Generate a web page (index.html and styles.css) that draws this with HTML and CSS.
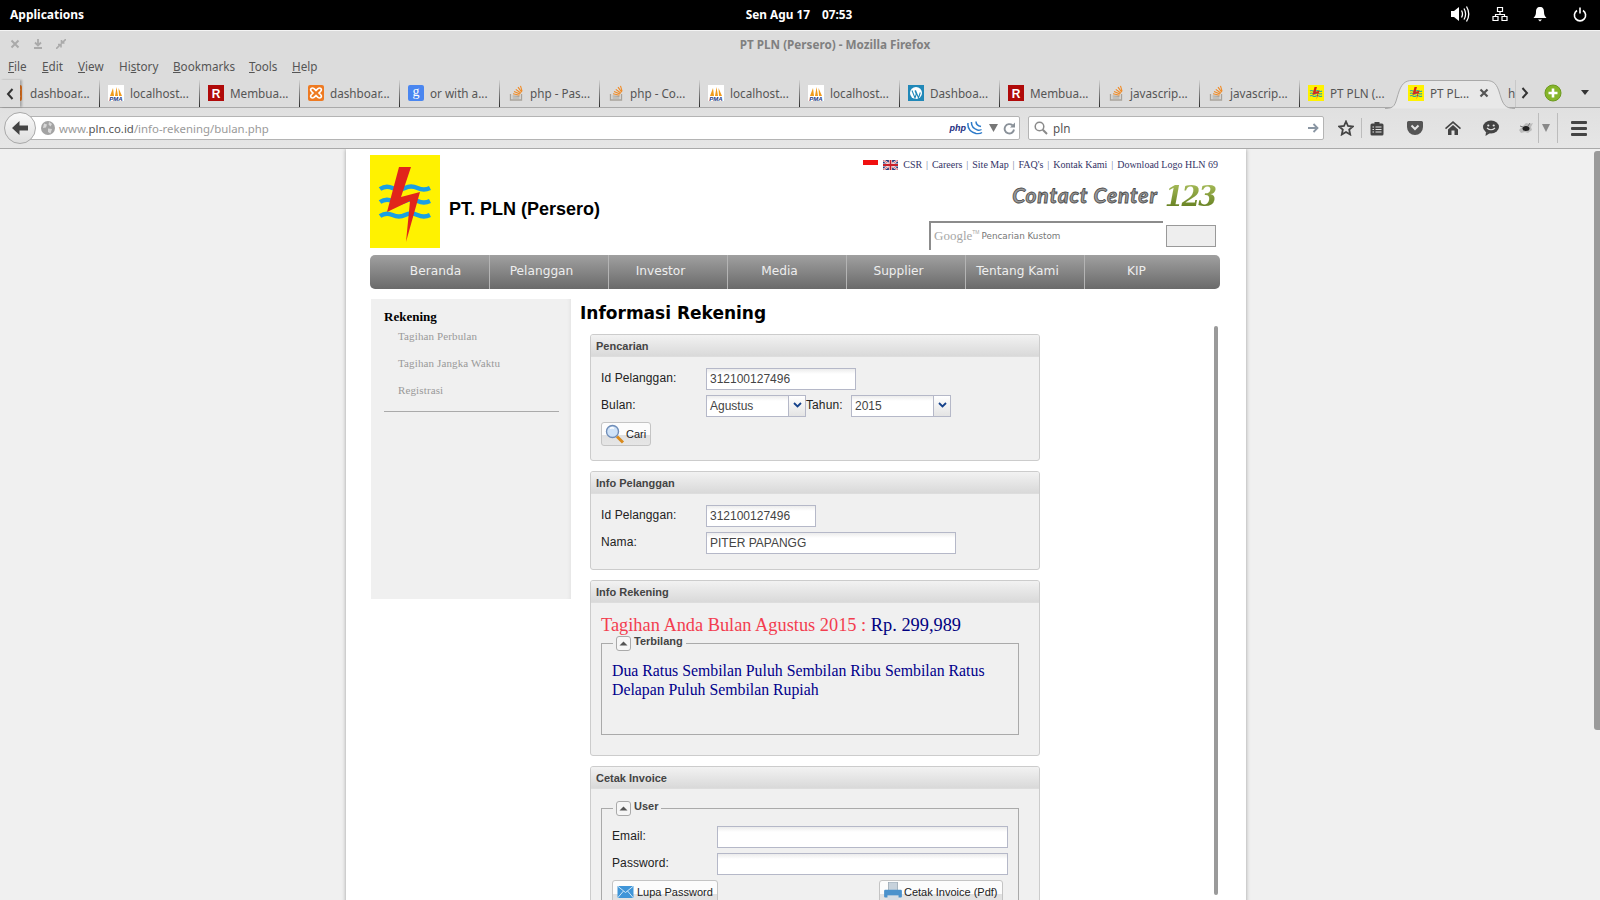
FILE: index.html
```html
<!DOCTYPE html>
<html lang="id">
<head>
<meta charset="utf-8">
<title>PT PLN (Persero) - Mozilla Firefox</title>
<link rel="stylesheet" href="styles.css">
</head>
<body>
<svg class="defs" width="0" height="0" aria-hidden="true">
  <symbol id="i-pma" viewBox="0 0 16 16">
    <rect width="16" height="16" fill="#fff"/>
    <path d="M2 11 5 3l1 8zM7 11l1.500-9L10 11zM11 11 10.500 3 14 11z" fill="#f09a1a"/>
  </symbol>
  <symbol id="i-r" viewBox="0 0 16 16">
    <rect width="16" height="16" fill="#b00a0a"/>
  </symbol>
  <symbol id="i-x" viewBox="0 0 16 16">
    <rect width="16" height="16" rx="2" fill="#ee7a22"/>
    <path d="M4.500 3C2.500 3 2 5 3.500 6.500L5 8 3.500 9.500C2 11 2.500 13 4.500 13 6 13 7 11.500 8 10.500 9 11.500 10 13 11.500 13 13.500 13 14 11 12.500 9.500L11 8l1.500-1.500C14 5 13.500 3 11.500 3 10 3 9 4.500 8 5.500 7 4.500 6 3 4.500 3z" fill="none" stroke="#fff" stroke-width="1.700"/>
  </symbol>
  <symbol id="i-g" viewBox="0 0 16 16">
    <rect width="16" height="16" rx="2" fill="#4a86f0"/>
  </symbol>
  <symbol id="i-so" viewBox="0 0 16 16">
    <path d="M2.500 9v6h11V9" fill="none" stroke="#a8a39a" stroke-width="1.300"/>
    <path d="M4.500 13h7M4.500 11l7 .4" stroke="#a8a39a" stroke-width="1.100"/>
    <path d="M5 8.800l6.500 1.400M6 6.500l6 2.600M7.800 4.400l5.200 3.800M10 2.200l3.700 5M12.500 .8l1.600 5.500" stroke="#f08a24" stroke-width="1.100"/>
  </symbol>
  <symbol id="i-wp" viewBox="0 0 16 16">
    <rect width="16" height="16" fill="#2188b8"/>
    <circle cx="8" cy="8" r="6" fill="#fff"/>
    <path d="M4 5.500 7 13l1.300-4L7 5.500M7.500 5.500l3 7.500 1.800-5.500" fill="none" stroke="#2188b8" stroke-width="1.100"/>
  </symbol>
  <symbol id="i-pln" viewBox="0 0 16 16">
    <rect width="16" height="16" fill="#fff200"/>
    <path d="M2 6q1.500-1 3 0t3 0 3 0 3 0M2 8.500q1.500-1 3 0t3 0 3 0 3 0M2 11q1.500-1 3 0t3 0 3 0 3 0" fill="none" stroke="#2ca6a0" stroke-width="1.100"/>
    <path d="M6.500 2h2.500L7.500 7l4-1.500L8.500 14.500l1-6.500-5 2z" fill="#d9231a"/>
  </symbol>
  <symbol id="i-tri-up" viewBox="0 0 15 15">
    <path d="M3.500 9.500 7.500 5.500l4 4z" fill="#555"/>
  </symbol>
</svg>

<header class="topbar">
  <div class="topbar-left">Applications</div>
  <div class="clock"><span>Sen Agu 17</span><span>07:53</span></div>
  <div class="tray">
    <svg width="20" height="18" viewBox="0 0 20 18"><path d="M1 6h3l5-4v14l-5-4H1z" fill="#fff"/><path d="M11.500 5.500q2 3.500 0 7M14 3.500q3.200 5.500 0 11M16.500 1.500q4.500 7.500 0 15" fill="none" stroke="#fff" stroke-width="1.300"/></svg>
    <svg class="tray-net" width="16" height="16" viewBox="0 0 16 16"><path d="M5.500 1.500h5v4h-5zM1 10.500h5v4H1zM10 10.500h5v4h-5zM8 5.500v3M3.500 10.500v-2h9v2" fill="none" stroke="#fff" stroke-width="1.200"/></svg>
    <svg class="tray-bell" width="14" height="16" viewBox="0 0 14 16"><path d="M7 1c3 0 4 2 4 5 0 3 1 4.500 2.500 6h-13C2 10.500 3 9 3 6c0-3 1-5 4-5zM5 13.500h4L7 15.500z" fill="#fff"/></svg>
    <svg class="tray-pow" width="14" height="15" viewBox="0 0 14 15"><path d="M4 3.500a5.600 5.600 0 1 0 6 0M7 .5v6" fill="none" stroke="#fff" stroke-width="1.600"/></svg>
  </div>
</header>

<div class="chrome">
  <div class="titlebar">
    <div class="winbtns">
      <svg width="10" height="10" viewBox="0 0 10 10"><path d="M1.500 1.500l7 7M8.500 1.500l-7 7" stroke="#aaa" stroke-width="2"/></svg>
      <svg width="10" height="10" viewBox="0 0 10 10"><path d="M5 0v5M2 3.500l3 3 3-3M1 9h8" fill="none" stroke="#aaa" stroke-width="1.800"/></svg>
      <svg width="10" height="10" viewBox="0 0 10 10"><path d="M0 10l4-4M2 5.500h3v3M10 0L6 4M5.500 1v3h3" fill="none" stroke="#aaa" stroke-width="1.600"/></svg>
    </div>
    <div class="wintitle">PT PLN (Persero) - Mozilla Firefox</div>
  </div>
  <nav class="menubar">
    <span class="m-file"><u>F</u>ile</span>
    <span class="m-edit"><u>E</u>dit</span>
    <span class="m-view"><u>V</u>iew</span>
    <span class="m-hist">Hi<u>s</u>tory</span>
    <span class="m-book"><u>B</u>ookmarks</span>
    <span class="m-tool"><u>T</u>ools</span>
    <span class="m-help"><u>H</u>elp</span>
  </nav>
  <div class="tabstrip">
    <div class="tab-scroll"><svg width="8" height="12" viewBox="0 0 8 12"><path d="M6.500 1 2 6l4.500 5" fill="none" stroke="#333" stroke-width="2"/></svg></div>
    <div class="tab tab-first"><svg class="fav fav-clip" width="16" height="16"><use href="#i-x"/></svg><span>dashboar...</span></div>
    <div class="tab"><svg class="fav" width="16" height="16" viewBox="0 0 16 16"><use href="#i-pma"/><text x="8" y="15.800" class="svg-pma">PMA</text></svg><span>localhost...</span></div>
    <div class="tab"><svg class="fav" width="16" height="16" viewBox="0 0 16 16"><use href="#i-r"/><text x="8" y="13" class="svg-r">R</text></svg><span>Membua...</span></div>
    <div class="tab"><svg class="fav" width="16" height="16"><use href="#i-x"/></svg><span>dashboar...</span></div>
    <div class="tab"><svg class="fav" width="16" height="16" viewBox="0 0 16 16"><use href="#i-g"/><text x="8" y="11" class="svg-g">g</text></svg><span>or with a...</span></div>
    <div class="tab"><svg class="fav" width="16" height="16"><use href="#i-so"/></svg><span>php - Pas...</span></div>
    <div class="tab"><svg class="fav" width="16" height="16"><use href="#i-so"/></svg><span>php - Co...</span></div>
    <div class="tab"><svg class="fav" width="16" height="16" viewBox="0 0 16 16"><use href="#i-pma"/><text x="8" y="15.800" class="svg-pma">PMA</text></svg><span>localhost...</span></div>
    <div class="tab"><svg class="fav" width="16" height="16" viewBox="0 0 16 16"><use href="#i-pma"/><text x="8" y="15.800" class="svg-pma">PMA</text></svg><span>localhost...</span></div>
    <div class="tab"><svg class="fav" width="16" height="16"><use href="#i-wp"/></svg><span>Dashboa...</span></div>
    <div class="tab"><svg class="fav" width="16" height="16" viewBox="0 0 16 16"><use href="#i-r"/><text x="8" y="13" class="svg-r">R</text></svg><span>Membua...</span></div>
    <div class="tab"><svg class="fav" width="16" height="16"><use href="#i-so"/></svg><span>javascrip...</span></div>
    <div class="tab"><svg class="fav" width="16" height="16"><use href="#i-so"/></svg><span>javascrip...</span></div>
    <div class="tab tab-plain"><svg class="fav" width="16" height="16"><use href="#i-pln"/></svg><span>PT PLN (...</span></div>
    <div class="tab tab-active">
      <svg class="tab-shape" width="130" height="29" viewBox="0 0 130 29"><path d="M0 28.500c10 0 10-4 13-14C16 4 20 .5 27 .5h74c8 0 11 3.500 14 14 3 10 5 14 15 14" fill="#e8e8e8" stroke="#a9a9a9"/></svg>
      <svg class="fav" width="16" height="16"><use href="#i-pln"/></svg><span>PT PL...</span>
      <svg class="tab-close" width="10" height="10" viewBox="0 0 10 10"><path d="M1.500 1.500l7 7M8.500 1.500l-7 7" stroke="#555" stroke-width="2.200"/></svg>
    </div>
    <div class="tab tab-cut"><span>h</span></div>
    <div class="tab-right">
      <svg width="8" height="12" viewBox="0 0 8 12"><path d="M1.500 1 6 6l-4.500 5" fill="none" stroke="#333" stroke-width="2"/></svg>
      <svg width="18" height="18" viewBox="0 0 18 18"><circle cx="9" cy="9" r="8" fill="#86b52a" stroke="#6c9a1e"/><path d="M9 4.500v9M4.500 9h9" stroke="#fff" stroke-width="2.600"/></svg>
      <svg width="8" height="5" viewBox="0 0 8 5"><path d="M0 0h8L4 5z" fill="#333"/></svg>
    </div>
  </div>
  <div class="toolbar">
    <div class="backbtn"><svg width="16" height="14" viewBox="0 0 16 14"><path d="M7.500 0 0 7l7.500 7v-4.500H16v-5H7.500z" fill="#444"/></svg></div>
    <div class="urlbar">
      <svg class="globe" width="14" height="14" viewBox="0 0 14 14"><circle cx="7" cy="7" r="7" fill="#a3a3a3"/><path d="M3 2.500l3 1-1 3-3 .5zM8 1l3 2-1.500 2.500L7.500 3.500zM7 7.500l4 .5-1.500 4.500L7 11z" fill="#d8d8d8"/></svg>
      <span class="url"><span class="url-dim">www.</span><span class="url-host">pln.co.id</span><span class="url-dim">/info-rekening/bulan.php</span></span>
      <span class="urlicons">
        <span class="php">php</span>
        <svg width="16" height="14" viewBox="0 0 16 14"><path d="M1 2q-1 8 8 10.500 4 .5 6-1M4.500 1q-.5 6 6 8 2.500.5 4-.5M9 .5q0 4 5 5" fill="none" stroke="#2c7ac9" stroke-width="1.500"/></svg>
        <svg class="ui-tri" width="9" height="8" viewBox="0 0 9 8"><path d="M0 0h9L4.500 8z" fill="#777"/></svg>
        <svg width="13" height="13" viewBox="0 0 13 13"><path d="M11 7.500a4.700 4.700 0 1 1-1.500-4.200" fill="none" stroke="#8a9199" stroke-width="1.900"/><path d="M12 .5v5H7z" fill="#8a9199"/></svg>
      </span>
    </div>
    <div class="searchbar">
      <svg width="14" height="14" viewBox="0 0 14 14"><circle cx="5.500" cy="5.500" r="4.300" fill="none" stroke="#8a8a8a" stroke-width="1.500"/><path d="M8.800 8.800 13 13" stroke="#8a8a8a" stroke-width="2"/></svg>
      <span class="searchtext">pln</span>
      <svg class="search-go" width="11" height="10" viewBox="0 0 11 10"><path d="M0 5h9M5.500 1 9.500 5l-4 4" fill="none" stroke="#8a96a3" stroke-width="1.800"/></svg>
    </div>
    <div class="tools">
      <div class="tool t-star"><svg width="16" height="16" viewBox="0 0 16 16"><path d="M8 1.500 10 6l4.800.5-3.600 3.200 1 4.800L8 12l-4.200 2.500 1-4.800L1.200 6.500 6 6z" fill="none" stroke="#444" stroke-width="1.800"/></svg></div>
      <div class="tsep t-sep1"></div>
      <div class="tool t-clip"><svg width="14" height="15" viewBox="0 0 14 15"><path d="M2 2.500h2.500V1h5v1.500H12a1.500 1.500 0 0 1 1.500 1.500v9A1.500 1.500 0 0 1 12 14.500H2A1.500 1.500 0 0 1 .5 13V4A1.500 1.500 0 0 1 2 2.500z" fill="#444"/><path d="M2.500 6h1.500M5.500 6h6M2.500 8.500h1.500M5.500 8.500h6M2.500 11h1.500M5.500 11h6" stroke="#e4e4e4"/></svg></div>
      <div class="tool t-wide t-pocket"><svg width="16" height="14" viewBox="0 0 16 14"><path d="M1.500 0h13A1.500 1.500 0 0 1 16 1.500V6a8 8 0 0 1-16 0V1.500A1.500 1.500 0 0 1 1.500 0z" fill="#555"/><path d="M4.500 4.500 8 8l3.500-3.500" fill="none" stroke="#e4e4e4" stroke-width="2"/></svg></div>
      <div class="tool t-wide"><svg width="16" height="14" viewBox="0 0 16 14"><path d="M8 0 16 7l-1 1.200-7-6-7 6L0 7zM3 8.500 8 4l5 4.500V14H9.500V9.500h-3V14H3z" fill="#444"/></svg></div>
      <div class="tool t-wide"><svg width="16" height="16" viewBox="0 0 16 16"><ellipse cx="8" cy="7" rx="8" ry="6.500" fill="#444"/><path d="M3 12 2.500 16 7 13z" fill="#444"/><circle cx="5.300" cy="5.500" r="1.100" fill="#e4e4e4"/><circle cx="10.700" cy="5.500" r="1.100" fill="#e4e4e4"/><path d="M4 8q4 3.500 8 0" fill="none" stroke="#e4e4e4" stroke-width="1.200"/></svg></div>
      <div class="tool t-ghost"><svg width="16" height="12" viewBox="0 0 16 12"><path d="M1 8 5 4l3-3 4 1 3-1-2 4 1 3-4 3-3-1-4 1z" fill="#bbb"/><ellipse cx="8" cy="6.500" rx="3.500" ry="2.500" fill="#222"/><path d="M2 4l3 1M12 1l-2 3" stroke="#777"/></svg></div>
      <div class="tsep t-sep2"></div>
      <div class="tool t-tri"><svg width="8" height="8" viewBox="0 0 8 8"><path d="M0 0h8L4 8z" fill="#888"/></svg></div>
      <div class="tsep t-sep3"></div>
      <div class="tool t-burger"><span></span><span></span><span></span></div>
    </div>
  </div>
</div>

<div class="viewport">
  <div class="sitewrap">
    <div class="site">
      <header class="sitehead">
        <svg class="logo" width="70" height="93" viewBox="0 0 70 93">
          <rect width="70" height="93" fill="#fff200"/>
          <g fill="none" stroke="#1aa0e2" stroke-width="4.500">
            <path d="M10 34q6-4 12.500-1t12.500 0 12.500 0 12.500 0"/>
            <path d="M10 47q6-4 12.500-1t12.500 0 12.500 0 12.500 0"/>
            <path d="M10 61q6-4 12.500-1t12.500 0 12.500 0 12.500 0"/>
          </g>
          <path d="M29 12h12L31 42l19-5-14 50 4-41-23 11z" fill="#e1251b"/>
        </svg>
        <div class="sitename">PT. PLN (Persero)</div>
        <div class="headright">
          <div class="toplinks">
            <span class="flag-id"></span>
            <svg class="flag-uk" width="15" height="10" viewBox="0 0 15 10"><rect width="15" height="10" fill="#2a3a7a"/><path d="M0 0l15 10M15 0 0 10" stroke="#fff" stroke-width="2"/><path d="M0 0l15 10M15 0 0 10" stroke="#c8202a" stroke-width=".7"/><path d="M7.500 0v10M0 5h15" stroke="#fff" stroke-width="3.200"/><path d="M7.500 0v10M0 5h15" stroke="#c8202a" stroke-width="1.800"/></svg>
            <span class="toplink-text">CSR <i>|</i> Careers <i>|</i> Site Map <i>|</i> FAQ's <i>|</i> Kontak Kami <i>|</i> Download Logo HLN 69</span>
          </div>
          <div class="contact"><span class="contact-a">Contact Center</span><span class="contact-b">123</span></div>
          <div class="sitesearch">
            <div class="gbox"><span class="glogo">Google<sup>TM</sup></span><span class="gtext">Pencarian Kustom</span></div>
            <div class="gbtn"></div>
          </div>
        </div>
      </header>
      <nav class="mainnav">
        <a class="nav-first">Beranda</a>
        <a>Pelanggan</a>
        <a>Investor</a>
        <a>Media</a>
        <a>Supplier</a>
        <a>Tentang Kami</a>
        <a class="nav-last">KIP</a>
      </nav>
      <div class="columns">
        <aside class="sidebar">
          <div class="side-title">Rekening</div>
          <ul class="side-list">
            <li>Tagihan Perbulan</li>
            <li>Tagihan Jangka Waktu</li>
            <li>Registrasi</li>
          </ul>
          <div class="side-rule"></div>
        </aside>
        <main class="content">
          <h1>Informasi Rekening</h1>

          <section class="panel p-cari">
            <div class="panel-head">Pencarian</div>
            <div class="panel-body">
              <div class="frow">
                <label>Id Pelanggan:</label>
                <input class="inp w150" type="text" value="312100127496">
              </div>
              <div class="frow">
                <label>Bulan:</label>
                <div class="combo w100"><span>Agustus</span><b><svg width="9" height="6" viewBox="0 0 9 6"><path d="M1 1l3.500 3.500L8 1" fill="none" stroke="#15428b" stroke-width="1.800"/></svg></b></div>
                <label class="lab-tahun">Tahun:</label>
                <div class="combo w100"><span>2015</span><b><svg width="9" height="6" viewBox="0 0 9 6"><path d="M1 1l3.500 3.500L8 1" fill="none" stroke="#15428b" stroke-width="1.800"/></svg></b></div>
              </div>
              <button class="btn btn-cari" type="button">
                <svg width="20" height="20" viewBox="0 0 20 20"><circle cx="7.500" cy="7.500" r="6" fill="#cfe2f7" stroke="#6f8db8" stroke-width="1.400"/><path d="M5 4.500q2-1.500 4 0" fill="none" stroke="#fff" stroke-width="1.400"/><path d="M12 12.500l6 6" stroke="#d98a1c" stroke-width="3"/></svg>
                <span>Cari</span>
              </button>
            </div>
          </section>

          <section class="panel p-info">
            <div class="panel-head">Info Pelanggan</div>
            <div class="panel-body">
              <div class="frow">
                <label>Id Pelanggan:</label>
                <input class="inp w110" type="text" value="312100127496">
              </div>
              <div class="frow">
                <label>Nama:</label>
                <input class="inp w250" type="text" value="PITER PAPANGG">
              </div>
            </div>
          </section>

          <section class="panel p-rek">
            <div class="panel-head">Info Rekening</div>
            <div class="panel-body body-rek">
              <div class="tagihan"><span class="tag-red">Tagihan Anda Bulan Agustus 2015 :</span> <span class="tag-blue">Rp. 299,989</span></div>
              <fieldset class="fset fset-terbilang">
                <legend><span class="coll"><svg width="15" height="15"><use href="#i-tri-up"/></svg></span><span class="leg-text">Terbilang</span></legend>
                <p class="terbilang">Dua Ratus Sembilan Puluh Sembilan Ribu Sembilan Ratus Delapan Puluh Sembilan Rupiah</p>
              </fieldset>
            </div>
          </section>

          <section class="panel p-cetak">
            <div class="panel-head">Cetak Invoice</div>
            <div class="panel-body body-rek2">
              <fieldset class="fset fset-user">
                <legend><span class="coll"><svg width="15" height="15"><use href="#i-tri-up"/></svg></span><span class="leg-text">User</span></legend>
                <div class="frow frow-u">
                  <label>Email:</label>
                  <input class="inp w291" type="text">
                </div>
                <div class="frow frow-u">
                  <label>Password:</label>
                  <input class="inp w291" type="password">
                </div>
                <div class="btnrow">
                  <button class="btn btn-lupa" type="button">
                    <svg width="17" height="12" viewBox="0 0 16 12"><rect width="16" height="12" fill="#3f95d8"/><path d="M0 0l8 6.500L16 0M0 12l6-7M16 12l-6-7" fill="none" stroke="#cde6f8" stroke-width="1"/></svg>
                    <span>Lupa Password</span>
                  </button>
                  <button class="btn btn-cetak" type="button">
                    <svg width="18" height="20" viewBox="0 0 16 18"><rect x="4" y="0" width="8" height="8" fill="#c7d2dc" stroke="#8b9aa8" stroke-width=".6"/><rect x="0" y="7" width="16" height="7" rx="1" fill="#4b92cc"/><rect x="3" y="12" width="10" height="6" fill="#d5dde4"/></svg>
                    <span>Cetak Invoice (Pdf)</span>
                  </button>
                </div>
              </fieldset>
            </div>
          </section>
        </main>
      </div>
      <div class="inner-scroll"></div>
    </div>
  </div>
  <div class="page-scroll"></div>
</div>
</body>
</html>
```
FILE: styles.css
```css
* { box-sizing: border-box; }
html, body { margin: 0; padding: 0; height: 100%; overflow: hidden; }
body { width: 1600px; height: 900px; display: flex; flex-direction: column; font-family: "Noto Sans", sans-serif; background: #f0f0f0; }
.defs { position: absolute; }
.svg-pma { font: italic bold 6px "Liberation Sans", sans-serif; fill: #23377f; text-anchor: middle; }
.svg-r { font: bold 12px "Liberation Sans", sans-serif; fill: #fff; text-anchor: middle; }
.svg-g { font: 14px "Liberation Serif", serif; fill: #fff; text-anchor: middle; }

/* desktop panel */
.topbar { flex: none; height: 31px; padding-bottom: 2px; background: #000; border-bottom: 1px solid #f4f4f4; display: grid; grid-template-columns: 1fr auto 1fr; align-items: center; color: #fff; font-size: 12px; font-weight: 700; }
.topbar-left { padding-left: 10px; }
.clock { display: flex; gap: 12px; font-size: 11.800px; margin-left: -2px; }
.tray { display: flex; align-items: center; justify-content: flex-end; padding-right: 13px; }
.tray-net { margin-left: 22px; }
.tray-bell { margin-left: 25px; }
.tray-pow { margin-left: 26px; }

/* firefox chrome */
.chrome { flex: none; background: #dcdcdc; color: #555; font-size: 11.700px; }
.titlebar { height: 26px; display: flex; align-items: center; }
.winbtns { width: 70px; display: flex; gap: 13px; padding-left: 10px; }
.wintitle { flex: 1; text-align: center; font-weight: 700; color: #808080; }
.menubar { height: 21px; padding: 0 0 4px 8px; display: flex; align-items: center; color: #555; }
.menubar span { margin-right: 16px; }
.menubar .m-file { width: 18px; }
.menubar .m-edit { width: 20px; }
.menubar .m-view { width: 25px; }
.menubar .m-hist { width: 38px; }
.menubar .m-book { width: 60px; }
.menubar .m-tool { width: 27px; }
.tabstrip { height: 30px; display: flex; align-items: stretch; border-bottom: 1px solid #a9a9a9; padding-top: 2px; }
.tab-scroll { width: 20px; display: flex; align-items: center; padding-left: 6px; position: relative; box-shadow: 2px 0 2px rgba(0,0,0,.25); z-index: 2; }
.tab { width: 100px; flex: none; display: flex; align-items: center; padding: 0 0 2px 8px; border-right: 1px solid; border-image: linear-gradient(to bottom, transparent, #222) 1; color: #555; }
.tab span { margin-left: 6px; white-space: nowrap; }
.fav { flex: none; }
.tab-first { width: 80px; padding-left: 0; overflow: hidden; }
.fav-clip { margin-left: -14px; }
.tab-first span { margin-left: 8px; }
.tab-plain { border-right: 0; }
.tab-active { position: relative; border-right: 0; }
.tab-active > .fav, .tab-active > span, .tab-close { position: relative; }
.tab-shape { position: absolute; left: -15px; top: 0; }
.tab-close { margin-left: 10px; }
.tab-cut { width: 15px; padding-left: 8px; border-right: 0; overflow: hidden; }
.tab-cut span { margin-left: 0; }
.tab-right { flex: 1; display: flex; align-items: center; border-left: 1px solid #c8c8c8; position: relative; padding: 0 0 2px 5px; background: #dcdcdc; }
.tab-right svg:nth-child(2) { margin-left: 15px; }
.tab-right svg:nth-child(3) { margin-left: 19px; }
.toolbar { height: 41px; display: flex; align-items: center; padding: 0 0 0 4px; background: linear-gradient(#e0e0e0, #e6e6e6); border-bottom: 1px solid #a9a9a9; }
.backbtn { width: 32px; height: 32px; flex: none; border-radius: 50%; background: linear-gradient(#fafafa, #dedede); border: 1px solid #a9a9a9; display: flex; align-items: center; justify-content: center; position: relative; z-index: 1; }
.urlbar { flex: 1; height: 24px; margin-left: -8px; padding-left: 12px; background: #fff; border: 1px solid #b4b4b4; border-radius: 0 2px 2px 0; display: flex; align-items: center; }
.globe { flex: none; }
.url { margin-left: 4px; white-space: nowrap; font-size: 11.400px; }
.url-dim { color: #9a9a9a; }
.url-host { color: #555; }
.urlicons { margin-left: auto; display: flex; align-items: center; padding-right: 3px; }
.php { font: italic bold 9px "Liberation Sans", sans-serif; color: #23307f; margin-right: 1px; }
.ui-tri { margin: 0 5px 0 6px; }
.searchbar { width: 296px; height: 24px; flex: none; margin-left: 8px; background: #fff; border: 1px solid #b4b4b4; border-radius: 2px; display: flex; align-items: center; padding: 0 4px 0 5px; }
.searchtext { margin-left: 5px; color: #555; }
.search-go { margin-left: auto; }
.tools { flex: none; width: 276px; display: flex; align-items: center; padding-left: 10px; height: 100%; }
.tool { display: flex; align-items: center; justify-content: center; flex: none; }
.t-star { width: 24px; }
.tsep { width: 1px; flex: none; background: #bcbcbc; }
.t-sep1 { height: 20px; margin-left: 3px; }
.t-clip { width: 30px; }
.t-wide { width: 38px; }
.t-pocket { margin-left: 4px; }
.t-ghost { width: 25px; margin-left: 3px; }
.t-sep2, .t-sep3 { height: 30px; }
.t-tri { width: 14px; }
.t-sep3 { margin-left: 4px; }
.t-burger { flex-direction: column; gap: 3px; margin-left: 13px; }
.t-burger span { display: block; width: 16px; height: 3px; background: #444; border-radius: 1px; }

/* page */
.viewport { flex: 1; min-height: 0; position: relative; overflow: hidden; background: #f0f0f0; }
.sitewrap { display: flex; justify-content: center; padding-right: 8px; height: 100%; }
.site { width: 900px; height: 1200px; padding: 6px 26px 0 24px; background: #fff; box-shadow: 0 0 4px rgba(0,0,0,.35); position: relative; }
.sitehead { display: flex; height: 93px; }
.logo { flex: none; }
.sitename { margin: 44px 0 0 9px; font: 700 18px/20px "Liberation Sans", sans-serif; color: #000; white-space: nowrap; }
.headright { margin-left: auto; display: flex; flex-direction: column; align-items: flex-end; padding-right: 2px; }
.toplinks { display: flex; align-items: center; height: 20px; padding-top: 4px; font: 10px/12px "Liberation Serif", serif; color: #333366; }
.toplinks i { font-style: normal; color: #6a7a9a; margin: 0 1.400px; }
.flag-id { width: 15px; height: 10px; background: linear-gradient(#f01010 50%, #fff 50%); margin-right: 5px; }
.flag-uk { margin-right: 5px; }
.contact { display: flex; align-items: center; height: 27px; margin-top: 10px; }
.contact-a { font: italic 700 21px/27px "Lato", sans-serif; color: #9a9a9a; -webkit-text-stroke: .8px #4a4a4a; letter-spacing: .8px; white-space: nowrap; }
.contact-b { margin: 4px 0 0 7px; font: italic 700 27px/27px "DejaVu Serif", serif; background: linear-gradient(#a8bd5a, #5f7a1c); -webkit-background-clip: text; background-clip: text; color: transparent; letter-spacing: -2px; padding-right: 3px; }
.sitesearch { display: flex; align-items: flex-start; margin-top: 13px; padding-right: 2px; }
.gbox { width: 234px; height: 29px; border-top: 2px solid #8c8c8c; border-left: 2px solid #8c8c8c; display: flex; align-items: center; padding: 0 0 2px 3px; background: #fff; }
.glogo { font: 13px "Liberation Serif", serif; color: #a6a6a6; }
.glogo sup { font: 5px "Liberation Sans", sans-serif; vertical-align: 6px; }
.gtext { margin-left: 2px; font: 8.800px "DejaVu Sans", sans-serif; color: #777; }
.gbtn { width: 50px; height: 22px; margin: 4px 0 0 3px; background: #eee; border: 1px solid #999; }

.mainnav { display: flex; height: 34px; margin-top: 7px; width: 850px; border-radius: 5px; background: linear-gradient(#a0a0a0, #6a6a6a); overflow: hidden; }
.mainnav a { width: 119px; flex: none; padding: 0 15px 3px 0; display: flex; align-items: center; justify-content: center; color: #eee; font: 12.200px "DejaVu Sans", sans-serif; border-right: 1px solid #b4b4b4; }
.mainnav .nav-first { padding-left: 12px; padding-right: 0; width: 120px; }
.mainnav .nav-last { border-right: 0; flex: 1; padding-right: 32px; }

.columns { display: flex; margin-top: 10px; }
.sidebar { width: 200px; height: 300px; flex: none; background: #f0f0f0; margin-left: 1px; padding: 11px 12px 0 13px; box-shadow: inset -4px 0 4px -3px rgba(0,0,0,.06); }
.side-title { font: 700 13px/14px "Liberation Serif", serif; color: #000; }
.side-list { list-style: none; margin: 0; padding: 5px 0 1px 14px; font: 11px/14px "Liberation Serif", serif; color: #999; letter-spacing: .13px; }
.side-list li { height: 27px; }
.side-rule { height: 1px; background: #aaa; }
.content { width: 460px; margin-left: 9px; }
h1 { margin: 0; font: 700 17px/28px "DejaVu Sans", sans-serif; color: #000; height: 35px; }

.panel { width: 450px; margin: 0 0 10px 10px; background: #f0f0f0; border: 1px solid #ccc; border-radius: 3px; overflow: hidden; }
.panel-head { height: 22px; padding-left: 5px; background: linear-gradient(#f2f2f2, #d9d9d9); border-bottom: 1px solid #ddd; font: 700 11px/22px "Liberation Sans", sans-serif; color: #444; }
.p-cari { height: 127px; }
.p-info { height: 99px; }
.p-rek { height: 176px; }
.p-cetak { height: 300px; margin-bottom: 0; }
.panel-body { padding: 11px 10px 0; font: 12px "Liberation Sans", sans-serif; color: #222; }
.frow { display: flex; height: 27px; align-items: flex-start; }
.frow label { width: 105px; flex: none; line-height: 20px; color: #222; letter-spacing: .1px; }
.frow .lab-tahun { width: 45px; }
.inp { height: 22px; padding: 0 3px; border: 1px solid #b5b8c8; border-radius: 0; background: linear-gradient(#ececec, #fff 5px); font: 12px "Liberation Sans", sans-serif; color: #444; outline: 0; }
.w150 { width: 150px; }
.w110 { width: 110px; }
.w250 { width: 250px; }
.w291 { width: 291px; }
.combo { display: flex; height: 22px; border: 1px solid #b5b8c8; background: linear-gradient(#ececec, #fff 5px); color: #444; line-height: 21px; }
.w100 { width: 100px; flex: none; }
.combo span { flex: 1; padding-left: 3px; }
.combo b { width: 17px; display: flex; align-items: center; justify-content: center; padding-bottom: 3px; border-left: 1px solid #b5b8c8; background: linear-gradient(#fff, #e4e4e4); }
.btn { height: 24px; padding: 0 4px; display: inline-flex; align-items: center; gap: 3px; border: 1px solid #c4c4c4; border-radius: 3px; background: linear-gradient(#fcfcfc 55%, #e0e0e0 55%, #e6e6e6); font: 11px "Liberation Sans", sans-serif; color: #222; white-space: nowrap; }
.btn-cari { width: 50px; gap: 1px; padding: 0 2px 0 3px; }
.body-rek { padding-top: 11px; }
.tagihan { height: 22px; font: 18.350px/23px "Liberation Serif", serif; white-space: nowrap; }
.tag-red { color: #f33d4f; }
.tag-blue { color: #000080; }
.fset { margin: 0; padding: 0; width: 418px; border: 1px solid #aaa; min-inline-size: 0; }
.fset legend { display: flex; align-items: center; margin-left: 11px; padding: 0 3px; height: 15px; }
.coll { width: 15px; height: 15px; flex: none; border: 1px solid #aaa; border-radius: 3px; background: #f6f6f6; display: flex; align-items: center; justify-content: center; }
.coll svg { flex: none; }
.leg-text { margin: -4px 0 0 3px; font: 700 11px/13px "Liberation Sans", sans-serif; color: #444; }
.fset-terbilang { height: 99px; }
.terbilang { margin: 0; padding: 10px 20px 0 10px; font: 15.800px/19px "Liberation Serif", serif; color: #00008b; }
.body-rek2 { padding-top: 12px; }
.fset-user { height: 200px; padding: 10px 10px 0; }
.fset-user legend { margin-left: 1px; }
.frow-u label { width: 105px; }
.btnrow { display: flex; justify-content: space-between; padding-right: 5px; }
.btn-lupa { width: 106px; height: 26px; gap: 3px; padding: 0 0 2px 4px; }
.btn-cetak { width: 124px; height: 26px; gap: 2px; padding: 0 0 2px 4px; }

.inner-scroll { position: absolute; left: 868px; top: 177px; width: 4px; height: 569px; background: #9a9a9a; border-radius: 2px; }
.page-scroll { position: absolute; right: 0; top: 2px; width: 6px; height: 579px; background: #9a9a9a; border-radius: 3px 0 0 3px; }
```
